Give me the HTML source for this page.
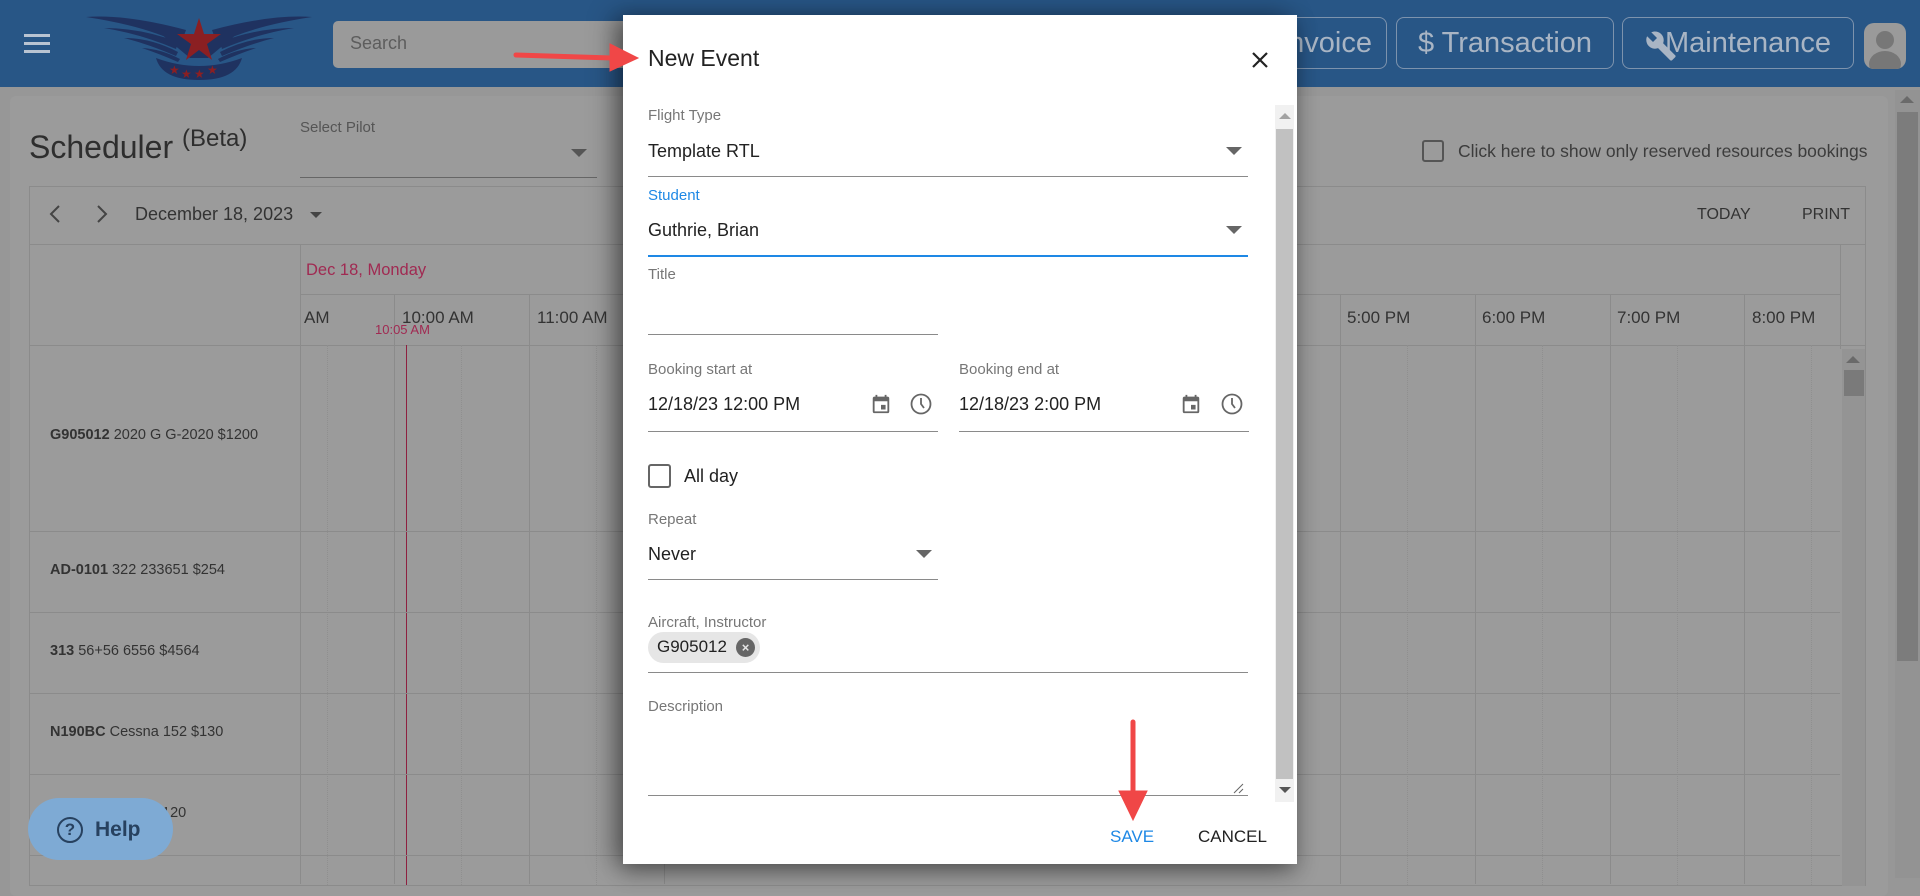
<!DOCTYPE html>
<html><head><meta charset="utf-8">
<style>
*{box-sizing:border-box;margin:0;padding:0}
body{width:1920px;height:878px;overflow:hidden;background:#979797;font-family:"Liberation Sans",sans-serif;position:relative;color:#333}
.a{position:absolute;white-space:nowrap}
.hdr{left:0;top:0;width:1920px;height:87px;background:#285686}
.btn{border:1.5px solid #7d93ad;border-radius:8px;height:52px;top:17px;color:#a9b5c4;font-size:29px;line-height:50px;text-align:center}
.vl{position:absolute;width:1px;background:#8b8b8b}
.dl{position:absolute;width:0;border-left:1px dotted #8f8f8f}
.hl{position:absolute;height:1px;background:#8b8b8b}
.dlg{left:623px;top:15px;width:674px;height:849px;background:#fff;box-shadow:-10px 0 24px rgba(0,0,0,.35),0 8px 20px rgba(0,0,0,.3)}
.lbl{font-size:15px;color:#777}
.val{font-size:18px;color:#222}
.ul{position:absolute;height:1px;background:#8a8a8a}
.tri{position:absolute;width:0;height:0;border-left:8px solid transparent;border-right:8px solid transparent;border-top:8px solid #666}
.res{font-size:14.5px;color:#333;left:50px}
.res b{font-weight:bold}
</style></head><body>

<div class="a hdr"></div>
<div class="a" style="left:24px;top:34px;width:26px;height:3px;background:#b9c4d2;box-shadow:0 8px 0 #b9c4d2,0 16px 0 #b9c4d2"></div>
<svg class="a" style="left:86px;top:12px" width="226" height="70" viewBox="0 0 226 70">
 <g fill="#1f3260">
  <path d="M0 5 Q40 2 100 18 L95 32 Q60 14 0 5Z"/>
  <path d="M226 5 Q186 2 126 18 L131 32 Q166 14 226 5Z"/>
  <path d="M18 16 Q55 16 92 30 L90 37 Q55 22 18 16Z"/>
  <path d="M208 16 Q171 16 134 30 L136 37 Q171 22 208 16Z"/>
  <path d="M38 26 Q65 26 92 40 L90 44 Q62 32 38 26Z"/>
  <path d="M188 26 Q161 26 134 40 L136 44 Q164 32 188 26Z"/>
  <path d="M56 36 Q75 37 94 47 L92 50 Q74 42 56 36Z"/>
  <path d="M170 36 Q151 37 132 47 L134 50 Q152 42 170 36Z"/>
  <path d="M75 22 L151 22 L122 46 L104 46Z"/>
  <path d="M70 46 Q113 62 156 46 Q150 68 113 68 Q76 68 70 46Z"/>
 </g>
 <polygon fill="#8b1f22" points="113,6 118,22 135,22 121,32 126,48 113,38 100,48 105,32 91,22 108,22"/>
 <g fill="#8b1f22" font-size="12">
  <text x="83" y="62">★</text><text x="95" y="66">★</text><text x="108" y="66">★</text><text x="121" y="62">★</text>
 </g>
</svg>
<div class="a" style="left:333px;top:21px;width:320px;height:47px;background:#9a9a9a;border-radius:5px"></div>
<div class="a" style="left:350px;top:33px;font-size:18px;color:#5d5d5d">Search</div>
<div class="a btn" style="left:1250px;width:137px;text-align:right;padding-right:14px">Invoice</div>
<div class="a btn" style="left:1396px;width:218px">$ Transaction</div>
<div class="a btn" style="left:1622px;width:232px;padding-left:20px">Maintenance</div>
<svg class="a" style="left:1645px;top:30px" width="32" height="32" viewBox="0 0 24 24"><path fill="#a9b5c4" d="M22.7 19l-9.1-9.1c.9-2.3.4-5-1.5-6.9-2-2-5-2.4-7.4-1.3L9 6 6 9 1.6 4.7C.4 7.1.9 10.1 2.9 12.1c1.9 1.9 4.6 2.4 6.9 1.5l9.1 9.1c.4.4 1 .4 1.4 0l2.3-2.3c.5-.4.5-1.1.1-1.4z"/></svg>
<div class="a" style="left:1864px;top:23px;width:42px;height:46px;background:#9a9a9a;border-radius:10px;overflow:hidden">
 <div class="a" style="left:12px;top:8px;width:18px;height:18px;border-radius:50%;background:#777"></div>
 <div class="a" style="left:5px;top:28px;width:32px;height:26px;border-radius:50%;background:#777"></div>
</div>

<div class="a" style="left:10px;top:96px;width:1878px;height:800px;background:#9b9b9b;border-radius:6px"></div>
<div class="a" style="left:29px;top:129px;font-size:32px;color:#2e2e2e">Scheduler <span style="font-size:24px;position:relative;top:-12px">(Beta)</span></div>
<div class="a" style="left:300px;top:119px;font-size:15px;color:#555">Select Pilot</div>
<div class="tri" style="left:571px;top:149px;border-top-color:#555"></div>
<div class="a" style="left:300px;top:177px;width:297px;height:1px;background:#666"></div>
<div class="a" style="left:1422px;top:140px;width:22px;height:22px;border:2px solid #555;border-radius:3px"></div>
<div class="a" style="left:1458px;top:141px;font-size:17.5px;color:#3c3c3c">Click here to show only reserved resources bookings</div>

<div class="a" style="left:29px;top:186px;width:1837px;height:700px;border:1px solid #8b8b8b"></div>
<div class="hl" style="left:29px;top:244px;width:1837px"></div>
<svg class="a" style="left:48px;top:204px" width="14" height="20"><path d="M11 2L3 10L11 18" fill="none" stroke="#444" stroke-width="2"/></svg>
<svg class="a" style="left:95px;top:204px" width="14" height="20"><path d="M3 2L11 10L3 18" fill="none" stroke="#444" stroke-width="2"/></svg>
<div class="a" style="left:135px;top:204px;font-size:18px;color:#333">December 18, 2023</div>
<div class="tri" style="left:310px;top:212px;border-left-width:6px;border-right-width:6px;border-top-width:6px;border-top-color:#444"></div>
<div class="a" style="left:1697px;top:206px;font-size:16px;color:#333">TODAY</div>
<div class="a" style="left:1802px;top:206px;font-size:16px;color:#333">PRINT</div>

<div class="vl" style="left:300px;top:244px;height:640px"></div>
<div class="vl" style="left:1840px;top:244px;height:105px"></div>
<div class="hl" style="left:300px;top:294px;width:1540px"></div>
<div class="hl" style="left:29px;top:345px;width:1837px"></div>
<div class="a" style="left:306px;top:261px;font-size:16.5px;color:#a02a52">Dec 18, Monday</div>
<div class="vl" style="left:394px;top:294px;height:590px"></div>
<div class="vl" style="left:529px;top:294px;height:590px"></div>
<div class="vl" style="left:664px;top:294px;height:590px"></div>
<div class="vl" style="left:1340px;top:294px;height:590px"></div>
<div class="vl" style="left:1475px;top:294px;height:590px"></div>
<div class="vl" style="left:1610px;top:294px;height:590px"></div>
<div class="vl" style="left:1744px;top:294px;height:590px"></div>
<div class="dl" style="left:327px;top:345px;height:540px"></div>
<div class="dl" style="left:461px;top:345px;height:540px"></div>
<div class="dl" style="left:596px;top:345px;height:540px"></div>
<div class="dl" style="left:1407px;top:345px;height:540px"></div>
<div class="dl" style="left:1542px;top:345px;height:540px"></div>
<div class="dl" style="left:1677px;top:345px;height:540px"></div>
<div class="dl" style="left:1811px;top:345px;height:540px"></div>
<div class="a" style="left:304px;top:308px;font-size:17px;color:#333">AM</div>
<div class="a" style="left:402px;top:308px;font-size:17px;color:#333">10:00 AM</div>
<div class="a" style="left:537px;top:308px;font-size:17px;color:#333">11:00 AM</div>
<div class="a" style="left:1347px;top:308px;font-size:17px;color:#333">5:00 PM</div>
<div class="a" style="left:1482px;top:308px;font-size:17px;color:#333">6:00 PM</div>
<div class="a" style="left:1617px;top:308px;font-size:17px;color:#333">7:00 PM</div>
<div class="a" style="left:1752px;top:308px;font-size:17px;color:#333">8:00 PM</div>
<div class="a" style="left:375px;top:322px;font-size:13px;color:#a02a52">10:05 AM</div>
<div class="a" style="left:406px;top:345px;width:1px;height:540px;background:#8e2040"></div>
<div class="hl" style="left:29px;top:531px;width:1811px"></div>
<div class="hl" style="left:29px;top:612px;width:1811px"></div>
<div class="hl" style="left:29px;top:693px;width:1811px"></div>
<div class="hl" style="left:29px;top:774px;width:1811px"></div>
<div class="hl" style="left:29px;top:855px;width:1811px"></div>
<div class="a res" style="top:427px"><b>G905012</b> 2020 G G-2020 $1200</div>
<div class="a res" style="top:562px"><b>AD-0101</b> 322 233651 $254</div>
<div class="a res" style="top:643px"><b>313</b> 56+56 6556 $4564</div>
<div class="a res" style="top:724px"><b>N190BC</b> Cessna 152 $130</div>
<div class="a res" style="top:805px"><b>N1</b> Cessna 152 $120</div>
<div class="a" style="left:1842px;top:349px;width:23px;height:537px;background:#949494"></div>
<div class="tri" style="left:1846px;top:356px;border-top:none;border-bottom:7px solid #6a6a6a;border-left-width:7px;border-right-width:7px"></div>
<div class="a" style="left:1844px;top:370px;width:20px;height:26px;background:#7a7a7a"></div>
<div class="a" style="left:1895px;top:90px;width:25px;height:788px;background:#939393"></div>
<div class="tri" style="left:1900px;top:96px;border-top:none;border-bottom:7px solid #6a6a6a;border-left-width:7px;border-right-width:7px"></div>
<div class="a" style="left:1897px;top:112px;width:21px;height:549px;background:#7c7c7c"></div>

<div class="a" style="left:28px;top:798px;width:145px;height:62px;background:#7eaad4;border-radius:31px"></div>
<div class="a" style="left:57px;top:817px;width:26px;height:26px;border:2.5px solid #27415f;border-radius:50%;font-size:17px;line-height:21px;text-align:center;color:#27415f;font-weight:bold">?</div>
<div class="a" style="left:95px;top:818px;font-size:21px;font-weight:bold;color:#27415f">Help</div>

<div class="a dlg">
 <div class="a" style="left:25px;top:30px;font-size:23px;color:#222">New Event</div>
 <svg class="a" style="left:629px;top:37px" width="16" height="16" viewBox="0 0 16 16"><path d="M1 1L15 15M15 1L1 15" stroke="#222" stroke-width="2.2"/></svg>
 <div class="a" style="left:652px;top:90px;width:19px;height:697px;background:#f1f1f1"></div>
 <div class="tri" style="left:656px;top:98px;border-top:none;border-bottom:6px solid #a3a3a3;border-left-width:6px;border-right-width:6px"></div>
 <div class="a" style="left:653px;top:114px;width:17px;height:650px;background:#c1c1c1"></div>
 <div class="tri" style="left:656px;top:772px;border-top-width:6px;border-left-width:6px;border-right-width:6px;border-top-color:#555"></div>

 <div class="a lbl" style="left:25px;top:92px">Flight Type</div>
 <div class="a val" style="left:25px;top:126px">Template RTL</div>
 <div class="tri" style="left:603px;top:132px"></div>
 <div class="ul" style="left:25px;top:161px;width:600px"></div>

 <div class="a lbl" style="left:25px;top:172px;color:#1e88e5">Student</div>
 <div class="a val" style="left:25px;top:205px">Guthrie, Brian</div>
 <div class="tri" style="left:603px;top:211px"></div>
 <div class="ul" style="left:25px;top:240px;width:600px;height:2px;background:#1e88e5"></div>

 <div class="a lbl" style="left:25px;top:251px">Title</div>
 <div class="ul" style="left:25px;top:319px;width:290px"></div>

 <div class="a lbl" style="left:25px;top:346px">Booking start at</div>
 <div class="a val" style="left:25px;top:379px">12/18/23 12:00 PM</div>
 <svg class="a" style="left:247px;top:378px" width="22" height="22" viewBox="0 0 24 24"><path fill="#666" d="M19 4h-1V2h-2v2H8V2H6v2H5a2 2 0 0 0-2 2v14a2 2 0 0 0 2 2h14a2 2 0 0 0 2-2V6a2 2 0 0 0-2-2zm0 16H5V9h14zM12 13h5v5h-5z"/></svg>
 <svg class="a" style="left:286px;top:377px" width="24" height="24" viewBox="0 0 24 24"><circle cx="12" cy="12" r="9.5" fill="none" stroke="#666" stroke-width="1.8"/><path d="M12 6v6l3 4" fill="none" stroke="#666" stroke-width="1.8"/></svg>
 <div class="ul" style="left:25px;top:416px;width:290px"></div>

 <div class="a lbl" style="left:336px;top:346px">Booking end at</div>
 <div class="a val" style="left:336px;top:379px">12/18/23 2:00 PM</div>
 <svg class="a" style="left:557px;top:378px" width="22" height="22" viewBox="0 0 24 24"><path fill="#666" d="M19 4h-1V2h-2v2H8V2H6v2H5a2 2 0 0 0-2 2v14a2 2 0 0 0 2 2h14a2 2 0 0 0 2-2V6a2 2 0 0 0-2-2zm0 16H5V9h14zM12 13h5v5h-5z"/></svg>
 <svg class="a" style="left:597px;top:377px" width="24" height="24" viewBox="0 0 24 24"><circle cx="12" cy="12" r="9.5" fill="none" stroke="#666" stroke-width="1.8"/><path d="M12 6v6l3 4" fill="none" stroke="#666" stroke-width="1.8"/></svg>
 <div class="ul" style="left:336px;top:416px;width:290px"></div>

 <div class="a" style="left:25px;top:449px;width:23px;height:24px;border:2px solid #666;border-radius:3px"></div>
 <div class="a val" style="left:61px;top:451px">All day</div>

 <div class="a lbl" style="left:25px;top:496px">Repeat</div>
 <div class="a val" style="left:25px;top:529px">Never</div>
 <div class="tri" style="left:293px;top:535px"></div>
 <div class="ul" style="left:25px;top:564px;width:290px"></div>

 <div class="a lbl" style="left:25px;top:599px">Aircraft, Instructor</div>
 <div class="a" style="left:25px;top:617px;width:112px;height:31px;background:#e6e6e6;border-radius:16px"></div>
 <div class="a" style="left:34px;top:622px;font-size:17px;color:#222">G905012</div>
 <div class="a" style="left:113px;top:623px;width:19px;height:19px;border-radius:50%;background:#666;color:#e6e6e6;font-size:13px;line-height:19px;text-align:center;font-weight:bold">×</div>
 <div class="ul" style="left:25px;top:657px;width:600px"></div>

 <div class="a lbl" style="left:25px;top:683px">Description</div>
 <svg class="a" style="left:609px;top:767px" width="12" height="12"><path d="M11 2L2 11M11 7L7 11" stroke="#666" stroke-width="1"/></svg>
 <div class="ul" style="left:25px;top:780px;width:600px"></div>

 <div class="a" style="left:487px;top:812px;font-size:17px;color:#1e88e5">SAVE</div>
 <div class="a" style="left:575px;top:812px;font-size:17px;color:#222">CANCEL</div>
</div>

<svg class="a" style="left:0;top:0" width="1920" height="878">
 <g fill="#f04747" stroke="#f04747" stroke-linecap="round">
  <path d="M516 55 L612 58" stroke-width="5" fill="none"/>
  <polygon points="610,44 638,58 610,71"/>
  <path d="M1133 722 L1133 790" stroke-width="5" fill="none"/>
  <polygon points="1119,791 1147,791 1133,820"/>
 </g>
</svg>
</body></html>
